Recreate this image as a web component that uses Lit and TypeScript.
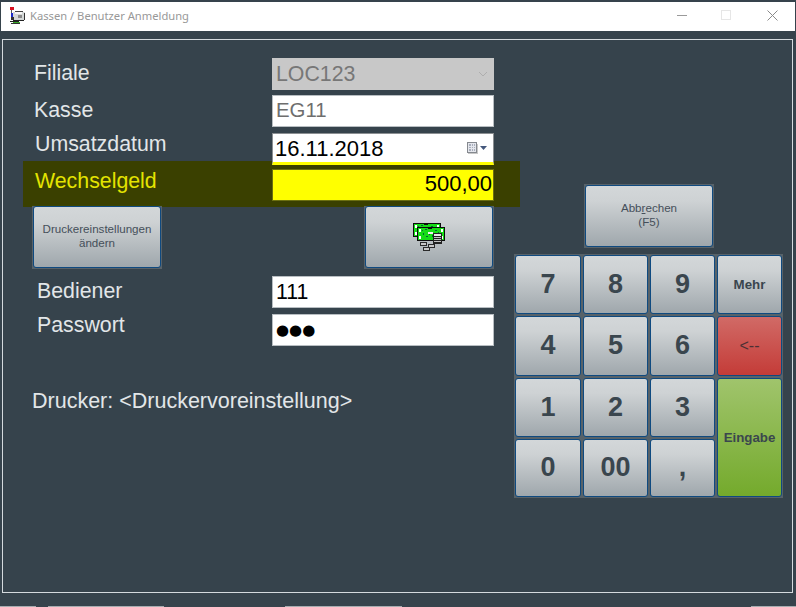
import { LitElement, html, css, svg } from "lit";
import { customElement } from "lit/decorators.js";

const titleIcon = html`<svg class="ticon" viewBox="0 0 17 17" width="17" height="17" shape-rendering="crispEdges">
  <rect x="1" y="0" width="4" height="3" fill="#d81020"/><rect x="2" y="3" width="1" height="3" fill="#555"/>
  <rect x="2" y="6" width="3" height="4" fill="#1a2ac8"/>
  <rect x="6" y="4" width="8" height="1" fill="#444"/><rect x="4" y="5" width="12" height="8" fill="#d4d8d8"/>
  <rect x="6" y="5" width="7" height="2" fill="#f8f8f8"/><rect x="15" y="6" width="1" height="7" fill="#333"/>
  <rect x="9" y="8" width="4" height="3" fill="#8a8a8a"/><rect x="2" y="10" width="3" height="3" fill="#333"/>
  <rect x="4" y="13" width="11" height="1" fill="#222"/><rect x="1" y="14" width="9" height="1" fill="#222"/>
  <rect x="4" y="15" width="7" height="1" fill="#3aa82a"/><rect x="2" y="16" width="9" height="1" fill="#333"/>
</svg>`;

const bill = (x: number, y: number) => svg`
  <rect x=${x} y=${y} width="28" height="14" fill="#0c0c0c"/>
  <rect x=${x + 1} y=${y + 1} width="26" height="12" fill="#16dc16"/>
  <rect x=${x + 2} y=${y + 2} width="2" height="3" fill="#fff"/><rect x=${x + 24} y=${y + 2} width="2" height="3" fill="#fff"/>
  <rect x=${x + 2} y=${y + 9} width="2" height="3" fill="#fff"/><rect x=${x + 24} y=${y + 9} width="2" height="3" fill="#fff"/>
  <rect x=${x + 5} y=${y + 3} width="1" height="1" fill="#063"/><rect x=${x + 8} y=${y + 2} width="2" height="1" fill="#063"/>
  <rect x=${x + 11} y=${y + 1} width="4" height="1" fill="#0c0c0c"/><rect x=${x + 18} y=${y + 3} width="2" height="1" fill="#063"/>
  <rect x=${x + 21} y=${y + 5} width="1" height="1" fill="#063"/><rect x=${x + 6} y=${y + 6} width="1" height="2" fill="#063"/>
  <rect x=${x + 9} y=${y + 9} width="2" height="1" fill="#063"/><rect x=${x + 12} y=${y + 5} width="1" height="3" fill="#063"/>
  <rect x=${x + 15} y=${y + 8} width="1" height="2" fill="#063"/><rect x=${x + 19} y=${y + 10} width="2" height="1" fill="#063"/>`;
const coin = (x: number, y: number) => svg`
  <rect x=${x} y=${y} width="7" height="4" fill="#2a2a2a"/>
  <rect x=${x + 1} y=${y + 1} width="5" height="2" fill="#c8c8c8"/>`;
const moneyIcon = html`<svg class="money" viewBox="0 0 33 29" width="33" height="29" shape-rendering="crispEdges">
  ${bill(0, 0)}${bill(4, 4)}
  <rect x="20" y="10" width="9" height="11" fill="#222"/>
  <rect x="21" y="11" width="7" height="2" fill="#e8e8e8"/><rect x="21" y="14" width="7" height="1" fill="#c4c4c4"/>
  <rect x="21" y="16" width="7" height="1" fill="#c4c4c4"/><rect x="21" y="18" width="7" height="1" fill="#c4c4c4"/>
  <rect x="15" y="9" width="5" height="2" fill="#f0f0f0"/>
  ${coin(7, 19)}${coin(15, 21)}${coin(10, 24)}
</svg>`;

const calIcon = html`<svg class="cal" viewBox="0 0 21 13" width="21" height="13" shape-rendering="crispEdges">
  <rect x="0" y="0" width="10" height="11" fill="#85898f"/><rect x="1" y="1" width="8" height="9" fill="#e4e6ec"/>
  <rect x="2" y="2" width="6" height="7" fill="#a8aebc"/>
  <rect x="4" y="2" width="1" height="7" fill="#e4e6ec"/><rect x="6" y="2" width="1" height="7" fill="#e4e6ec"/>
  <rect x="2" y="4" width="6" height="1" fill="#e4e6ec"/><rect x="2" y="6" width="6" height="1" fill="#e4e6ec"/>
  <rect x="1" y="11" width="10" height="1" fill="#c8c8c8"/><rect x="10" y="2" width="1" height="9" fill="#c8c8c8"/>
  <path d="M13 4h7l-3.5 4z" fill="#44587c" shape-rendering="auto"/>
</svg>`;

@customElement("app-root")
export class AppRoot extends LitElement {
  static styles = css`
    :host {
      display: flex; flex-direction: column; width: 796px; height: 607px; overflow: hidden;
      background: #36434c; font-family: "Liberation Sans", Arial, sans-serif;
    }
    .titlebar {
      margin: 2px 1px 0; height: 29px; background: #fff; display: flex; align-items: center;
      padding-left: 8px; flex: none;
    }
    .ticon { margin-right: 4px; margin-top: -2px; }
    .title { font: 11.2px "Noto Sans", sans-serif; color: #989898; flex: 1; margin-top: -3px; }
    .winbtn { width: 45px; height: 29px; display: flex; align-items: center; justify-content: center; margin-top: -3px; }
    .winbtn.mid { margin-left: -1px; margin-right: 1px; }
    .frame {
      margin: 8px 0 0 2px; width: 791px; height: 554px; box-sizing: border-box; border: 1px solid #d4dade;
      display: flex; flex: none;
    }
    .left { width: 491px; padding: 18px 0 0 20px; flex: none; display: flex; flex-direction: column; box-sizing: content-box; }
    .row { display: grid; grid-template-columns: 249px 222px; align-items: center; height: 32px; margin-bottom: 5px; }
    .lab { font-size: 21.33px; color: #e2e6e8; white-space: nowrap; padding-left: 11px; margin-bottom: 2px; }
    .lab.x1 { padding-left: 12px; }
    .lab.x2 { padding-left: 14px; }
    .lab.lift { margin-bottom: 8px; }
    .lab.lift2 { margin-bottom: 9px; }
    .field {
      box-sizing: border-box; height: 32px; background: #fff; border: 1px solid #b8bec2; display: flex;
      align-items: center; padding: 0 3px; font-size: 21.33px; color: #000; white-space: nowrap; overflow: hidden;
    }
    .field.grey { color: #6e6e6e; font-size: 20.4px; padding-bottom: 2px; }
    .field.sel { background: #c8c8c8; border-color: #c8c8c8; color: #777; justify-content: space-between; }
    .field.date { position: relative; z-index: 1; border-color: #8b8f92; border-bottom: 3px solid #ffff00; justify-content: space-between; padding: 0 5px 0 2px; font-size: 22px; }
    .field.date .v { margin-bottom: -1px; }
    .field.date .cal { margin-top: 1px; }
    .field.money { background: #ffff00; border-color: #6b6f10; justify-content: flex-end; padding: 0 1px 2px 0; font-size: 22px; }
    .band {
      margin: -8px -6px 0 0; height: 46px; background: #3a4000; display: grid; grid-template-columns: 249px 222px;
      align-items: center; box-sizing: border-box; padding-top: 2px;
    }
    .band .lab { color: #e4e400; padding-left: 12px; }
    .btnrow { display: flex; justify-content: space-between; width: 462px; margin: -2px 0 7px 9px; position: relative; }
    .btn {
      display: block; border: 0; margin: 0; padding: 1px; background: #576269; font-family: inherit; cursor: default;
      box-sizing: border-box;
    }
    .btnrow .btn { background: linear-gradient(#3c4500 1px, #576269 1px); }
    .face {
      display: flex; align-items: center; justify-content: center; text-align: center; box-sizing: border-box;
      width: 100%; height: 100%; border: 1px solid #0f4a80; border-radius: 3px;
      background: linear-gradient(#d3d7d9 0%, #ced2d4 25%, #9fa7ac 100%); color: #454f5a; font-size: 11.6px; line-height: 14px;
    }
    .face.txt { padding-bottom: 3px; }
    .wide { width: 130px; height: 64px; }
    .printer { font-size: 21.5px; color: #e2e6e8; margin: 40px 0 0 9px; line-height: 23px; white-space: nowrap; }
    .right { padding-top: 144px; width: 269px; flex: none; }
    .abort { margin: 0 0 6px 70px; }
    .pad { display: grid; grid-template-columns: 68px 67px 67px 67px; grid-template-rows: 61px 62px 61px 60px; }
    .pad .face { color: #3a464e; font-weight: bold; font-size: 27px; padding-bottom: 2px; }
    .pad .small .face { font-size: 13.3px; padding-bottom: 0; }
    .pad .back .face { background: linear-gradient(#d16a66, #c43c38); font-weight: normal; font-size: 16px; color: #4a3034; }
    .pad .enter { grid-row: span 2; }
    .pad .enter .face { background: linear-gradient(#a0c46c, #74aa2c); }
    .bottom { flex: none; height: 1px; margin-top: 13px; display: flex; }
    .bottom i { display: block; height: 1px; background: #a6acb0; }
    .b1 { width: 36px; } .b2 { width: 116px; margin-left: 12px; } .b3 { width: 117px; margin-left: 121px; } .b4 { width: 45px; margin-left: 349px; }
    .chev { margin-right: 2px; }
    .dots { font-size: 15px; letter-spacing: 0; font-family: "DejaVu Sans", sans-serif; }
  `;

  private key(label: string, cls = "") {
    return html`<button class="btn ${cls}"><span class="face">${label}</span></button>`;
  }

  render() {
    return html`
      <div class="titlebar">
        ${titleIcon}
        <span class="title">Kassen / Benutzer Anmeldung</span>
        <span class="winbtn"><svg width="11" height="11" viewBox="0 0 11 11"><rect x="0" y="5" width="10" height="1" fill="#9a9a9a"/></svg></span>
        <span class="winbtn mid"><svg width="11" height="11" viewBox="0 0 11 11"><rect x=".5" y=".5" width="9" height="9" fill="none" stroke="#e6e6e6"/></svg></span>
        <span class="winbtn"><svg width="11" height="11" viewBox="0 0 11 11"><path d="M.5 .5l10 10M10.5 .5l-10 10" stroke="#8a8a8a" fill="none"/></svg></span>
      </div>
      <div class="frame">
        <div class="left">
          <div class="row"><span class="lab">Filiale</span>
            <div class="field sel"><span>LOC123</span>
              <svg class="chev" width="10" height="6" viewBox="0 0 10 6"><path d="M1 1l4 4 4-4" fill="none" stroke="#aeaeae"/></svg></div></div>
          <div class="row"><span class="lab">Kasse</span><div class="field grey">EG11</div></div>
          <div class="row"><span class="lab x1 lift2">Umsatzdatum</span>
            <div class="field date"><span class="v">16.11.2018</span>${calIcon}</div></div>
          <div class="band"><span class="lab lift">Wechselgeld</span><div class="field money">500,00</div></div>
          <div class="btnrow">
            <button class="btn wide"><span class="face txt"><span>Druckereinstellungen<br />ändern</span></span></button>
            <button class="btn wide"><span class="face">${moneyIcon}</span></button>
          </div>
          <div class="row"><span class="lab x2">Bediener</span><div class="field">111</div></div>
          <div class="row"><span class="lab x2 lift">Passwort</span><div class="field"><span class="dots">●●●</span></div></div>
          <div class="printer">Drucker: &lt;Druckervoreinstellung&gt;</div>
        </div>
        <div class="right">
          <button class="btn wide abort"><span class="face txt"><span>Abb<u>r</u>echen<br />(F5)</span></span></button>
          <div class="pad">
            ${this.key("7")}${this.key("8")}${this.key("9")}${this.key("Mehr", "small")}
            ${this.key("4")}${this.key("5")}${this.key("6")}${this.key("<--", "small back")}
            ${this.key("1")}${this.key("2")}${this.key("3")}${this.key("Eingabe", "small enter")}
            ${this.key("0")}${this.key("00")}${this.key(",")}
          </div>
        </div>
      </div>
      <div class="bottom"><i class="b1"></i><i class="b2"></i><i class="b3"></i><i class="b4"></i></div>
    `;
  }
}
